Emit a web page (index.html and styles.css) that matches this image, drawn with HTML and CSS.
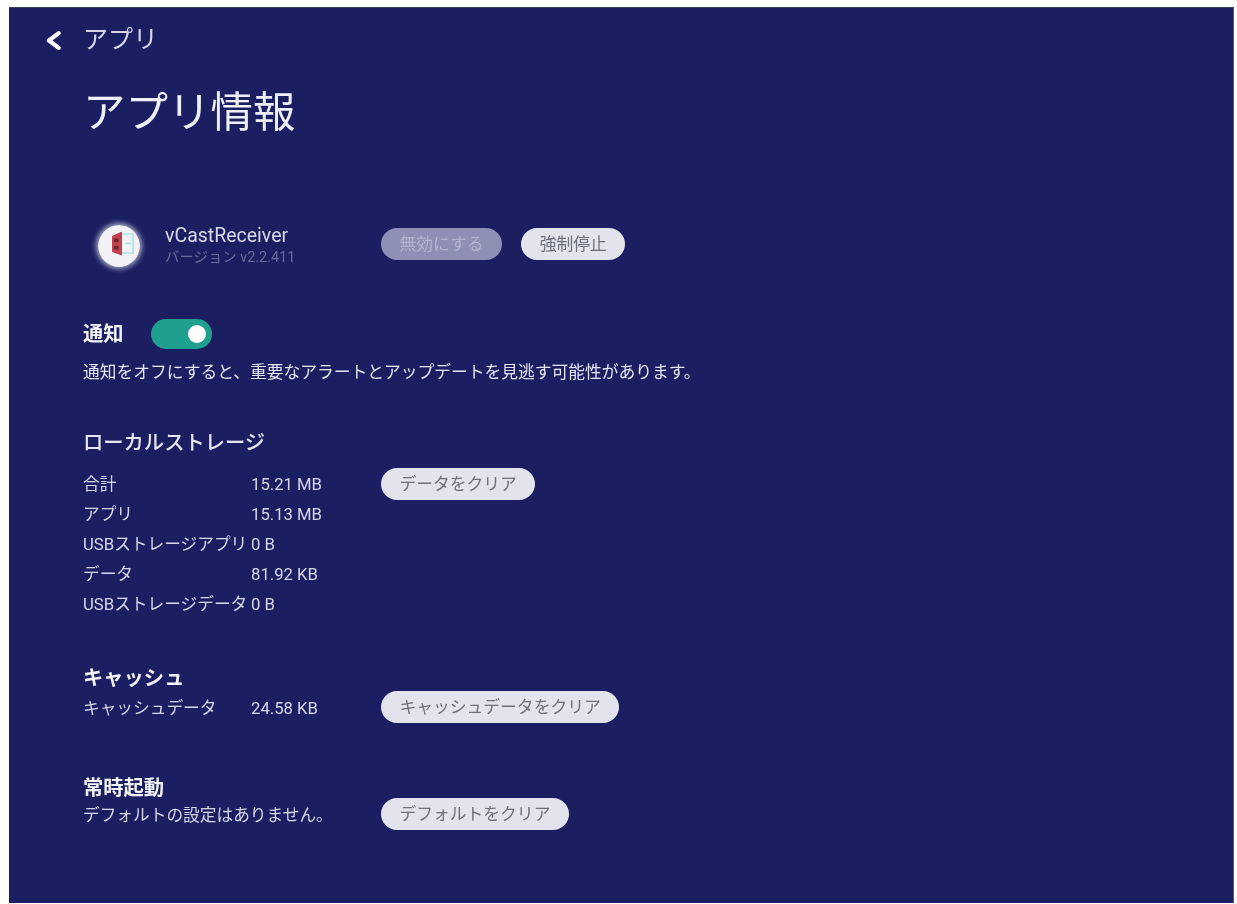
FILE: index.html
```html
<!DOCTYPE html>
<html lang="ja">
<head>
<meta charset="utf-8">
<title>アプリ情報</title>
<link rel="stylesheet" href="styles.css">
</head>
<body>
<main class="screen">
  <header class="back">
    <svg class="back-icon" viewBox="0 0 16 20" aria-hidden="true"><path d="M13 3 L3.6 10 L13 17" fill="none" stroke="#fff" stroke-width="4" stroke-linecap="round" stroke-linejoin="round"/></svg>
    <span class="back-label">アプリ</span>
  </header>
  <h1 class="title">アプリ情報</h1>

  <section class="app">
    <div class="logo">
      <svg viewBox="0 0 42 42" aria-hidden="true">
        <circle cx="21" cy="21" r="21" fill="#f1f1f6"/>
        <path d="M23 9 H35 V28 H23" fill="none" stroke="#a9e3e6" stroke-width="1.6"/>
        <path d="M27 18.5 H33" stroke="#a9e3e6" stroke-width="1.6"/>
        <path d="M14 11 L24 6.5 V30.5 L14 27 Z" fill="#c0404c"/>
        <path d="M16 13.5 H20.5 V17 H16 Z M16 21 H20.5 V24.5 H16 Z" fill="#6d2230"/>
      </svg>
    </div>
    <div class="app-text">
      <div class="app-name">vCastReceiver</div>
      <div class="app-version">バージョン v2.2.411</div>
    </div>
    <div class="app-actions">
      <button class="pill pill-disabled" type="button">無効にする</button>
      <button class="pill" type="button">強制停止</button>
    </div>
  </section>

  <section class="notify">
    <div class="notify-head">
      <h2 class="heading heading-bold">通知</h2>
      <span class="toggle"><span class="knob"></span></span>
    </div>
    <p class="line">通知をオフにすると、重要なアラートとアップデートを見逃す可能性があります。</p>
  </section>

  <section class="storage">
    <h2 class="heading">ローカルストレージ</h2>
    <div class="storage-body">
      <div class="rows">
        <div class="row"><span class="key">合計</span><span class="val">15.21 MB</span></div>
        <div class="row"><span class="key">アプリ</span><span class="val">15.13 MB</span></div>
        <div class="row"><span class="key">USBストレージアプリ</span><span class="val">0 B</span></div>
        <div class="row"><span class="key">データ</span><span class="val">81.92 KB</span></div>
        <div class="row"><span class="key">USBストレージデータ</span><span class="val">0 B</span></div>
      </div>
      <button class="pill" type="button">データをクリア</button>
    </div>
  </section>

  <section class="cache">
    <h2 class="heading heading-bold">キャッシュ</h2>
    <div class="row row-action">
      <span class="key">キャッシュデータ</span><span class="val val-fixed">24.58 KB</span>
      <button class="pill" type="button">キャッシュデータをクリア</button>
    </div>
  </section>

  <section class="launch">
    <h2 class="heading heading-bold">常時起動</h2>
    <div class="row row-action row-tight">
      <span class="key key-wide">デフォルトの設定はありません。</span>
      <button class="pill" type="button">デフォルトをクリア</button>
    </div>
  </section>
</main>
</body>
</html>
```
FILE: styles.css
```css
* { box-sizing: border-box; }
html, body { margin: 0; height: 100%; background: #fff; }
body {
  padding: 7px 3px 1px 9px;
  font-family: "Roboto", "Noto Sans CJK JP", sans-serif;
  color: #e9eaf3;
}
.screen {
  height: 896px;
  background: #1b1f62;
  border-top: 1px solid #3a3c62;
  border-right: 1px solid #54567c;
  padding: 17px 0 0 74px;
  overflow: hidden;
  filter: blur(0.45px);
}
.back { display: flex; align-items: center; margin-left: -38px; height: 30px; }
.back-icon { width: 17px; height: 21px; margin-right: 21px; }
.back-label { font-size: 25px; line-height: 30px; color: #d5d7e8; }
.title { margin: 28px 0 0 0; font-size: 42.5px; line-height: 60px; font-weight: 400; color: #eef0f8; }

.app { display: flex; align-items: flex-start; margin: 81px 0 0 15px; }
.logo { width: 42px; height: 42px; margin-top: 1px; border-radius: 50%; box-shadow: 0 0 5px 2px rgba(255,255,255,.6); }
.logo svg { display: block; width: 42px; height: 42px; }
.app-text { width: 216px; margin-left: 25px; }
.app-name { font-size: 19.5px; line-height: 24px; color: #d8dae9; }
.app-version { font-size: 14.4px; line-height: 18px; margin-top: 1px; color: #686c9c; }
.app-actions { display: flex; gap: 19.5px; margin-top: 4px; }

.pill {
  height: 32px;
  padding: 0 18.4px;
  border: 0;
  border-radius: 16px;
  background: #e2e3ec;
  color: #6d6f7c;
  font: 400 16.8px/32px "Roboto", "Noto Sans CJK JP", sans-serif;
  white-space: nowrap;
}
.pill-disabled { background: #8d8fb4; color: #b2b4cf; }

.heading { margin: 0; font-size: 20.3px; line-height: 30px; font-weight: 500; color: #e6e8f2; }
.heading-bold { font-weight: 700; color: #f2f3f8; }
.notify { margin-top: 52px; }
.notify-head { display: flex; align-items: center; gap: 27px; }
.toggle { display: flex; align-items: center; justify-content: flex-end; width: 61px; height: 30px; padding-right: 6px; border-radius: 15px; background: #1fa08f; }
.knob { width: 18px; height: 18px; border-radius: 50%; background: #fff; }
.line { margin: 8px 0 0; font-size: 16.75px; line-height: 30px; color: #e3e5f0; }

.storage { margin-top: 41px; }
.storage-body { display: flex; align-items: flex-start; margin-top: 10px; }
.rows { width: 298px; margin-top: 2px; }
.row { display: flex; align-items: center; font-size: 16.7px; line-height: 30px; color: #d5d7e6; }
.key { min-width: 168px; }
.val { white-space: nowrap; }
.val-fixed { width: 130px; }
.key-wide { width: 298px; }

.cache { margin-top: 43px; }
.launch { margin-top: 49px; }
.row-action { align-items: flex-start; margin-top: -2px; }
.row-action .key, .row-action .val { padding-top: 3px; }
.row-tight { margin-top: -5px; }
```
